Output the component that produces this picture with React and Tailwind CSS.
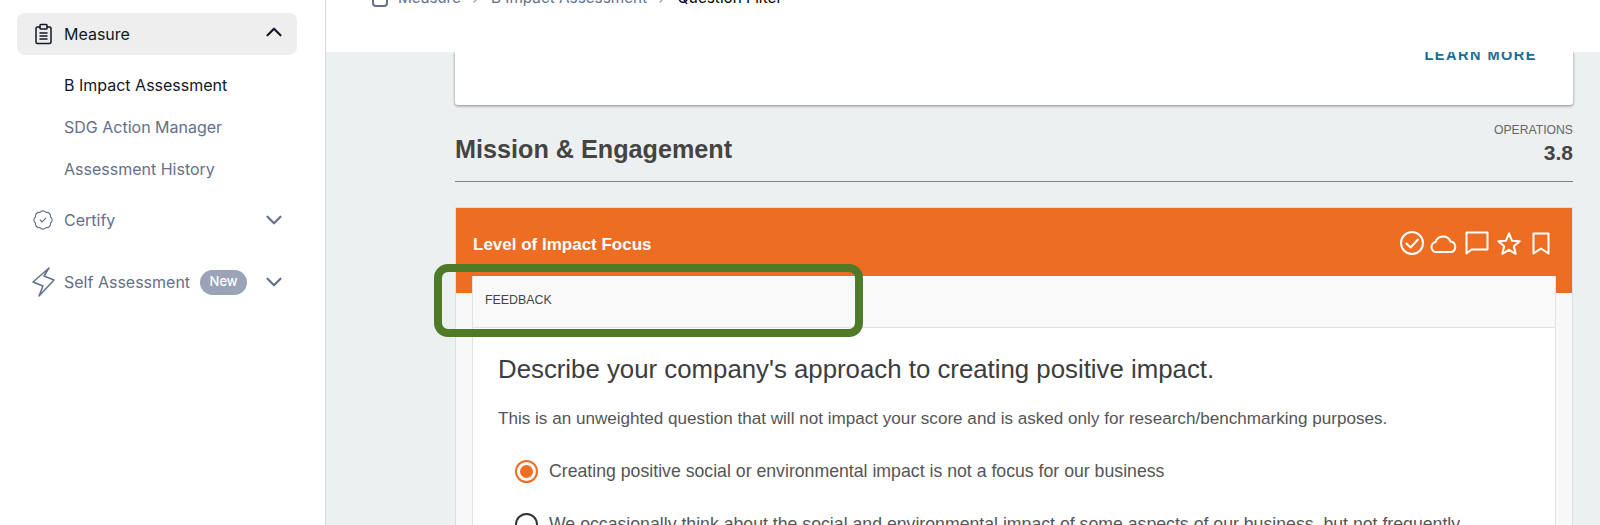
import { ChevronUp, ChevronDown, ChevronRight, BadgeCheck } from 'lucide-react'

const sans = 'font-[Inter,sans-serif]'
const helv = "font-['Liberation_Sans',Arial,sans-serif]"

function ClipboardIcon() {
  return (
    <svg width="20" height="22" viewBox="0 0 20 22" fill="none" stroke="currentColor" strokeWidth="1.5" strokeLinejoin="round" strokeLinecap="round" className="shrink-0">
      <path d="M6 4H3.500A1.500 1.500 0 0 0 2 5.500V19a1.500 1.500 0 0 0 1.500 1.500h12A1.500 1.500 0 0 0 17 19V5.500A1.500 1.500 0 0 0 15.500 4H13" />
      <rect x="6" y="1.500" width="7" height="4.500" rx="0.8" />
      <path d="M6 10h7M6 13h7M6 16h7" />
    </svg>
  )
}

function BoltIcon() {
  return (
    <svg width="24" height="30" viewBox="0 0 24 30" fill="none" stroke="currentColor" strokeWidth="1.5" strokeLinejoin="round" className="shrink-0">
      <path d="M17 1 1 15l10 4-4 10 15-16-10-4z" />
    </svg>
  )
}

function CardIcons() {
  return (
    <div className="-mt-[4px] flex h-[28px] items-center text-white">
      <svg width="24" height="24" viewBox="0 0 24 24" fill="none" stroke="currentColor" strokeWidth="2" strokeLinecap="round" strokeLinejoin="round">
        <circle cx="12" cy="12" r="11" />
        <path d="m6.500 12.500 4 4 7.500-8" />
      </svg>
      <svg width="28" height="18" viewBox="0 0 28 18" fill="none" stroke="currentColor" strokeWidth="2" strokeLinejoin="round" className="ml-[6px] mt-[1px]">
        <path d="M6.500 17A5 5 0 0 1 5.500 7.100 8 8 0 0 1 20.500 6.500 5.400 5.400 0 0 1 21.500 17z" />
      </svg>
      <svg width="24" height="24" viewBox="0 0 24 24" fill="none" stroke="currentColor" strokeWidth="2" strokeLinejoin="round" className="ml-[7px]">
        <path d="M1.500 1.500h21v17H6.500l-5 4z" />
      </svg>
      <svg width="24" height="23" viewBox="0 0 24 23" fill="none" stroke="currentColor" strokeWidth="2" strokeLinejoin="round" className="ml-[8px]">
        <path d="m12 1.500 3 7.200 7.700.6-5.900 5 1.900 7.500-6.700-4-6.700 4 1.900-7.500-5.900-5 7.700-.6z" />
      </svg>
      <svg width="18" height="23" viewBox="0 0 18 23" fill="none" stroke="currentColor" strokeWidth="2" strokeLinejoin="round" className="ml-[11px]">
        <path d="M1.500 1.500h15v20L9 16.500l-7.500 5z" />
      </svg>
    </div>
  )
}

function Sidebar() {
  return (
    <aside className={`w-[326px] shrink-0 border-r border-[#d5d9de] bg-white ${sans}`}>
      <div className="pt-[13px] pl-[17px] pr-[28px]">
        <div className="flex h-[42px] items-center rounded-lg bg-[#eeeeee] pl-[17px] pr-[10px] text-[#111827]">
          <ClipboardIcon />
          <span className="ml-[10px] flex-1 text-[16px]">Measure</span>
          <ChevronUp size={26} strokeWidth={2} className="-translate-y-[2px]" />
        </div>
        <div className="mt-[9px] flex flex-col pl-[47px] text-[16px]">
          <a className="flex h-[42px] items-center text-[#111827]">B Impact Assessment</a>
          <a className="flex h-[42px] items-center text-[#64708a]">SDG Action Manager</a>
          <a className="flex h-[42px] items-center text-[#64708a]">Assessment History</a>
        </div>
        <div className="mt-[9px] flex h-[42px] items-center pl-[15px] pr-[10px] text-[#64708a]">
          <BadgeCheck size={22} strokeWidth={1.25} className="shrink-0" />
          <span className="ml-[10px] flex-1 text-[16px]">Certify</span>
          <ChevronDown size={26} strokeWidth={2} />
        </div>
        <div className="mt-[20px] flex h-[42px] items-center pl-[15px] pr-[10px] text-[#64708a]">
          <BoltIcon />
          <span className="ml-[8px] text-[16px]">Self Assessment</span>
          <span className="ml-[10px] flex h-[25px] w-[47px] items-center justify-center rounded-full bg-[#9aa3b8] text-[13px] font-medium text-white">New</span>
          <ChevronDown size={26} strokeWidth={2} className="ml-auto" />
        </div>
      </div>
    </aside>
  )
}

function Breadcrumb() {
  return (
    <header className={`relative z-10 h-[52px] shrink-0 overflow-hidden bg-white pl-[46px] ${sans}`}>
      <div className="-mt-[12px] flex h-[20px] items-center text-[15.300px] text-[#64708a]">
        <span className="h-[18px] w-[16px] rounded-sm border-2 border-[#64708a]" />
        <span className="ml-[10px]">Measure</span>
        <ChevronRight size={16} className="mx-[7px] text-[#9aa3b8]" />
        <span>B Impact Assessment</span>
        <ChevronRight size={16} className="mx-[7px] text-[#9aa3b8]" />
        <span className="text-black">Question Filter</span>
      </div>
    </header>
  )
}

function QuestionCard() {
  return (
    <section className="relative mt-[25px] h-[400px] border border-[#dcdfe2] bg-[#f8f8f8]">
      <div className="flex h-[85px] justify-between bg-[#ed6d23] pl-[17px] pr-[22px] pt-[25px]">
        <h3 className="text-[17px] font-bold leading-[24px] text-white">Level of Impact Focus</h3>
        <CardIcons />
      </div>
      <div className="relative -mt-[17px] mx-[16px] border-x border-[#e2e2e2] bg-white">
        <div className="flex h-[52px] items-center border-b border-[#e2e2e2] bg-[#f9f9f9] pb-[2px] pl-[12px] text-[12.400px] text-[#444444]">
          FEEDBACK
        </div>
        <div className="px-[25px] pt-[26px]">
          <h2 className="text-[25.800px] leading-[30px] text-[#3d3d3d]">Describe your company's approach to creating positive impact.</h2>
          <p className="mt-[24px] text-[17.100px] leading-[22px] text-[#555555]">
            This is an unweighted question that will not impact your score and is asked only for research/benchmarking purposes.
          </p>
          <div className="mt-[29px] flex h-[24px] items-center pl-[17px]">
            <span className="flex h-[23px] w-[23px] items-center justify-center rounded-full border-2 border-[#ed6d23]">
              <span className="h-[13px] w-[13px] rounded-full bg-[#ed6d23]" />
            </span>
            <span className="ml-[11px] whitespace-nowrap text-[17.700px] text-[#555555]">Creating positive social or environmental impact is not a focus for our business</span>
          </div>
          <div className="mt-[29px] flex h-[24px] items-center pl-[17px]">
            <span className="h-[23px] w-[23px] rounded-full border-2 border-[#333333]" />
            <span className="ml-[11px] whitespace-nowrap text-[17.700px] text-[#555555]">We occasionally think about the social and environmental impact of some aspects of our business, but not frequently</span>
          </div>
        </div>
        {/* highlight drawn over the screenshot */}
        <div className="absolute -left-[39px] -top-[12px] h-[73px] w-[429px] rounded-[14px] border-[8px] border-[#4f7a28]" />
      </div>
    </section>
  )
}

export default function App() {
  return (
    <div className={`flex h-[525px] w-[1600px] overflow-hidden bg-white ${helv}`}>
      <Sidebar />
      <main className="flex min-w-0 flex-1 flex-col bg-[#edf0f1]">
        <Breadcrumb />
        <div className="flex-1 overflow-hidden pl-[129px] pr-[27px]">
          <div className="relative flex h-[53px] justify-end rounded-b-[3px] bg-white pr-[36px] shadow-[0_1px_3px_rgba(0,0,0,0.45)]">
            <a className="-mt-[7px] text-[14.500px] font-bold leading-[20px] tracking-[1.5px] text-[#1a6c96]">LEARN MORE</a>
          </div>
          <div className="flex h-[77px] items-end justify-between border-b border-[#7d8284] pb-[16px]">
            <h2 className="text-[25.200px] font-bold leading-[32px] text-[#444444]">Mission &amp; Engagement</h2>
            <div className="text-right">
              <div className="text-[12.200px] leading-[16px] text-[#666666]">OPERATIONS</div>
              <div className="mt-[3px] text-[21px] font-bold leading-[24px] text-[#444444]">3.8</div>
            </div>
          </div>
          <QuestionCard />
        </div>
      </main>
    </div>
  )
}
